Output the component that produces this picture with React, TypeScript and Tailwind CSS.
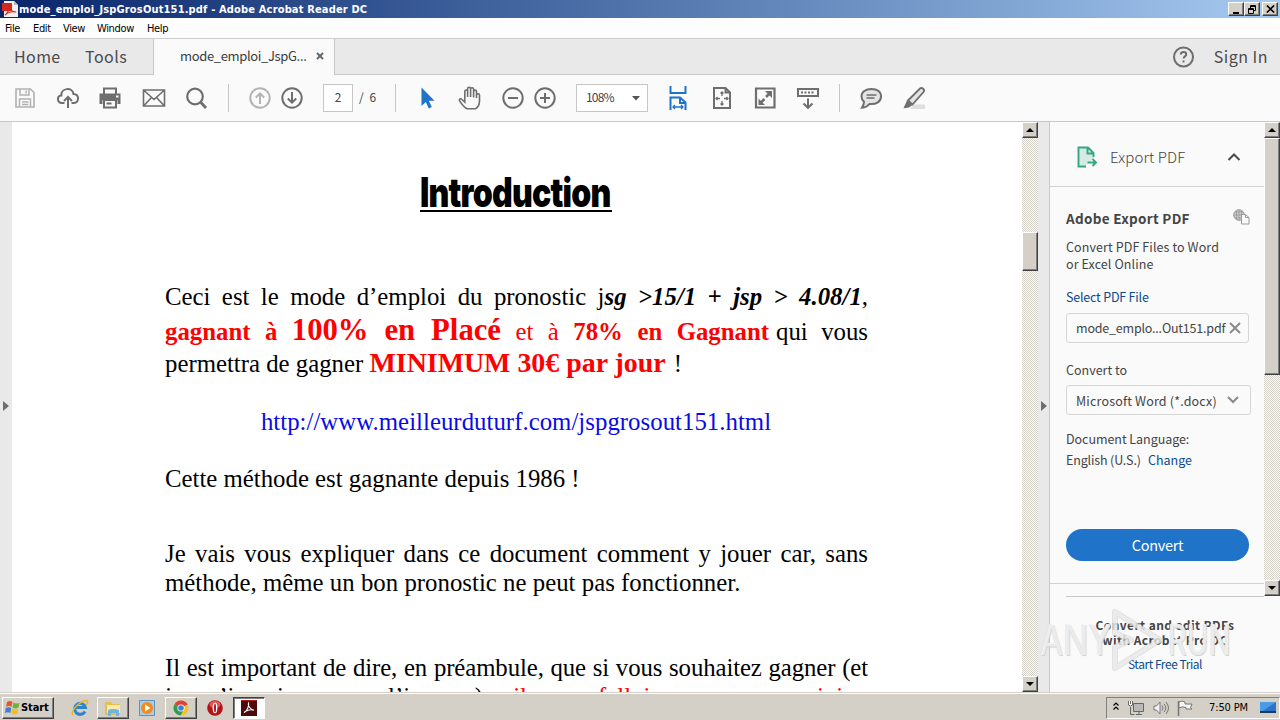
import type { ReactNode } from "react";

const DITHER =
  "bg-[conic-gradient(#ffffff_25%,#d4d0c8_0_50%,#ffffff_0_75%,#d4d0c8_0)] bg-[length:2px_2px]";
const RAISED =
  "bg-[#d4d0c8] border border-t-white border-l-white border-r-[#404040] border-b-[#404040] shadow-[inset_-1px_-1px_0_#808080]";

function ScrollArrow({ dir }: { dir: "up" | "down" }) {
  return (
    <div className={`${RAISED} flex h-4 w-4 shrink-0 items-center justify-center`}>
      <svg width="8" height="4" viewBox="0 0 8 4">
        <path d={dir === "up" ? "M0 4L4 0L8 4Z" : "M0 0L4 4L8 0Z"} fill="#000" />
      </svg>
    </div>
  );
}

function Icon({ children, className = "", color = "#6e6e6e" }: { children: ReactNode; className?: string; color?: string }) {
  return (
    <svg
      width="24"
      height="24"
      viewBox="0 0 24 24"
      fill="none"
      stroke={color}
      strokeWidth="2"
      className={`shrink-0 ${className}`}
    >
      {children}
    </svg>
  );
}

const Sep = () => <div className="h-7 w-px shrink-0 bg-[#c6c6c6]" />;

function TitleBar() {
  return (
    <div className="flex h-[18px] shrink-0 items-center bg-linear-to-r from-[#0a246a] to-[#a6caf0] pl-0.5 pr-0.5">
      <svg width="16" height="16" viewBox="0 0 16 16">
        <path d="M2 0h10l4 4v12H2z" fill="#f4f0f0" />
        <path d="M12 0v4h4z" fill="#b9b9b9" />
        <path d="M0 2h10v8H0z" fill="#d3281c" />
        <path d="M3 14c3-2 5-7 4-9c-1 3 3 6 7 6c-3-1-8 0-11 3z" fill="none" stroke="#d3281c" strokeWidth="1.2" />
      </svg>
      <div className="ml-[1px] pt-0.5 whitespace-nowrap font-['DejaVu_Sans_Condensed','DejaVu_Sans',sans-serif] text-[11px] font-bold tracking-[0.16px] text-white">
        mode_emploi_JspGrosOut151.pdf - Adobe Acrobat Reader DC
      </div>
      <div className="ml-auto flex">
        <div className={`${RAISED} flex h-3.5 w-4 items-center justify-center`}>
          <svg width="10" height="9" viewBox="0 0 10 9"><path d="M2 7h6v2H2z" fill="#000" /></svg>
        </div>
        <div className={`${RAISED} flex h-3.5 w-4 items-center justify-center`}>
          <svg width="10" height="9" viewBox="0 0 10 9" fill="none" stroke="#000">
            <path d="M3.5 3V.5h5v5H7M3 1.5h6M1.5 3.5h5v5h-5zM1 4.5h6" />
          </svg>
        </div>
        <div className={`${RAISED} ml-0.5 flex h-3.5 w-4 items-center justify-center`}>
          <svg width="9" height="8" viewBox="0 0 9 8" stroke="#000" strokeWidth="1.6">
            <path d="M.8 .5l7.4 7M8.2 .5l-7.4 7" />
          </svg>
        </div>
      </div>
    </div>
  );
}

function MenuBar() {
  return (
    <div className="flex h-5 shrink-0 items-center gap-3 bg-[#fdfdfd] pt-0.5 pl-[5px] font-['DejaVu_Sans_Condensed','DejaVu_Sans',sans-serif] text-[11px] tracking-[-0.35px] text-black">
      <span className="w-4">File</span>
      <span className="w-[18px]">Edit</span>
      <span className="w-[22px]">View</span>
      <span className="w-[38px]">Window</span>
      <span>Help</span>
    </div>
  );
}

function TabBar() {
  return (
    <div className="flex h-[37px] shrink-0 border-t border-[#cdcdcd] bg-[#e9e9e9] text-[#4b4b4b]">
      <div className="flex w-[154px] items-center border-r border-b border-[#c8c8c8] pb-0.5 pl-3.5 text-[16px] leading-5">
        <span className="w-[71px] tracking-[0.4px]">Home</span>
        <span className="tracking-[0.5px]">Tools</span>
      </div>
      <div className="flex w-[180px] items-center bg-[#fafafa] pb-0.5 pl-[26px] text-[13px] text-[#3c3c3c]">
        <span className="w-[136px] whitespace-nowrap tracking-[-0.35px]">mode_emploi_JspG...</span>
        <svg width="8" height="8" viewBox="0 0 8 8" stroke="#666" strokeWidth="2"><path d="M1 1l6 6M7 1L1 7" /></svg>
      </div>
      <div className="flex flex-1 items-center justify-end border-b border-l border-[#c8c8c8] pr-3 text-[16px]">
        <Icon className="mr-[18px]">
          <circle cx="11.500" cy="12" r="9.500" />
          <path d="M8.800 9.600c0-3.400 5.400-3.200 5.400-.2c0 2-2.600 2-2.600 4.200M11.500 15.500v2" />
        </Icon>
        <span className="pb-0.5 tracking-[0.5px]">Sign In</span>
      </div>
    </div>
  );
}

function Toolbar() {
  return (
    <div className="flex h-[47px] shrink-0 items-center gap-[19px] border-b border-[#c8c8c8] bg-[#fafafa] pl-[13px]">
      <Icon color="#b3b3b3">
        <path d="M3 3h14.5L21 6.500V21H3z" strokeWidth="1.700" />
        <path d="M7 3v6h9V3M6.500 21v-8h11v8M9 16h6.500M9 18.500h6.500M13 4.500v3" strokeWidth="1.500" />
      </Icon>
      <Icon>
        <path d="M8.500 17H6c-5 0-5.500-7-.7-7.500C5 1.500 16.500 1 17.500 8c6-.3 6 9 .5 9h-2.500M12 22V11.500M8 15l4-4l4 4" />
      </Icon>
      <Icon className="-ml-px">
        <path d="M6 8V2.500h12V8" />
        <path d="M1.500 7.500h21V18h-3v-4h-15v4h-3z" fill="#6e6e6e" stroke="none" />
        <path d="M6 14h12v7.500H6zM8.500 17.500h5" />
        <path d="M18 10.500h2.500" stroke="#fafafa" />
      </Icon>
      <Icon className="ml-px">
        <path d="M1.500 4h21v16h-21zM2 4.500l10 9L22 4.500M2 19.500l7.500-8M22 19.500l-7.500-8" strokeWidth="1.600" />
      </Icon>
      <Icon>
        <circle cx="10" cy="10.500" r="7.800" strokeWidth="2.200" />
        <path d="M15.500 16l5.500 6" strokeWidth="2.800" />
      </Icon>
      <Sep />
      <div className="flex gap-2">
        <Icon color="#b3b3b3"><circle cx="12" cy="12" r="9.700" /><path d="M12 18V7.500M7.800 11.500L12 7.300l4.200 4.200" /></Icon>
        <Icon><circle cx="12" cy="12" r="9.700" /><path d="M12 6v10.500M7.800 12.500l4.200 4.200l4.200-4.200" /></Icon>
      </div>
      <div className="flex items-center gap-1.5 text-[12px] leading-4 text-[#444]">
        <div className="flex h-7 w-[30px] items-center justify-center border border-[#c6c6c6] bg-white pb-0.5">2</div>
        <span className="w-[17px] pb-0.5 whitespace-pre [word-spacing:3px]">/ 6</span>
      </div>
      <Sep />
      <Icon color="none"><path d="M6.500 1.500V20l4.300-4l3 6.500l3-1.400l-3-6.300h5.700z" fill="#1f73c9" /></Icon>
      <Icon>
        <path d="M9 22.800c-3-1.500-5.500-4.800-7.500-8.100c-.8-1.600 1.200-2.600 2.500-1.200l2.800 2.700V5.500c0-2 2.800-2 2.800 0V11V2.800c0-2 3-2 3 0v8.200V3.300c0-2 3-2 3 0V11.500V5.500c0-1.900 2.900-1.900 2.900 0v6.500V9c0-1.700 3-1.700 3 0v6c0 3-1.500 6.300-4 7.800z" strokeWidth="1.600" />
      </Icon>
      <div className="flex gap-2">
        <Icon><circle cx="12" cy="12" r="9.700" /><path d="M7 12h10" /></Icon>
        <Icon><circle cx="12" cy="12" r="9.700" /><path d="M7 12h10M12 7v10" /></Icon>
      </div>
      <div className="flex h-7 w-[72px] items-center justify-between border border-[#c6c6c6] bg-white pr-[7px] pl-[9px] text-[12px] text-[#444]">
        <span className="pb-0.5 tracking-[-0.8px]">108%</span>
        <svg width="8" height="5" viewBox="0 0 8 5"><path d="M0 0h8L4 4.500z" fill="#555" /></svg>
      </div>
      <Icon color="#1f73c9" className="-ml-px">
        <path d="M4.500 0v7h15V0M4.500 24V11.500h9.500l5.500 5V24M14 12v5h5.500" />
        <path d="M7 21h10M9 19l-2 2l2 2M15 19l2 2l-2 2" strokeWidth="1.300" />
      </Icon>
      <Icon className="ml-px">
        <path d="M4 2h11.500L20 6.500V22H4zM15.500 2v4.500H20" />
        <path d="M12 6v4M12 15v4M6 12.500h4M14 12.500h4M10.500 7.500L12 6l1.500 1.500M10.500 17.500L12 19l1.500-1.500M7.500 11L6 12.500L7.500 14M16.500 11l1.500 1.500l-1.500 1.500" strokeWidth="1.300" />
      </Icon>
      <Icon>
        <path d="M3 2.500h18.500v19H3z" strokeWidth="2.200" />
        <path d="M12 5h7v7zM5.500 12.500v6.500H12z" fill="#6e6e6e" stroke="none" />
        <path d="M17 7L13 11M7.500 17L11.500 13" strokeWidth="2.500" />
      </Icon>
      <Icon>
        <path d="M2 3h20v7H2z" />
        <path d="M5 6.500h14" strokeDasharray="2 1.500" />
        <path d="M12 12.500v9M7.500 17.500l4.500 4.300l4.500-4.300" />
      </Icon>
      <Sep />
      <Icon>
        <path d="M12.500 3C6.500 3 2.500 6 2.500 10.500c0 2.300 1 4 2.500 5.200c0 2.300-.8 4-2 6c3.300-.3 6-1.700 7.500-3.700c7 .6 11.500-2.500 11.500-7.500S18 3 12.500 3z" fill="#e4e4e4" />
        <path d="M7.500 9h10M7.500 12h8" strokeWidth="1.500" />
      </Icon>
      <Icon>
        <path d="M12 18.500h11v4.500H8z" fill="#dedede" stroke="none" />
        <path d="M6 14.500L18 2.500c2-1.500 5.200 1 3.700 3.300L10.500 18.500z" fill="#e4e4e4" strokeWidth="1.800" />
        <path d="M5 14.500l5.500 4.500l-3.500 2.500l-5.500 .8z" fill="#6e6e6e" stroke="none" />
      </Icon>
    </div>
  );
}

const JUSTIFY = "text-justify [text-align-last:justify]";

function Document() {
  return (
    <div className="w-[1010px] shrink-0 overflow-hidden bg-white pl-[153px] font-['Liberation_Serif',serif] text-[24.8px] leading-[29px] text-black">
      <div className="flex h-[160px] w-[702px] justify-center pt-[49px]">
        <h1 className="h-[41px] w-[192px] border-b-2 border-black">
          <span className="-mt-px inline-block origin-left scale-x-[0.782] font-[Inter,sans-serif] text-[41px] leading-[44px] font-black tracking-[-1px]">Introduction</span>
        </h1>
      </div>
      <div className={`h-[29px] w-[703px] ${JUSTIFY}`}>
        Ceci est le mode d’emploi du pronostic j<b><i>sg &gt;15/1 + jsp &gt; 4.08/1</i></b>,
      </div>
      <div className="flex h-[35px] w-[703px] items-baseline justify-between leading-[38px]">
        <div className={`w-[604px] text-[#ff0000] ${JUSTIFY}`}>
          <b>gagnant à <span className="text-[30.7px]">100% en Placé</span></b> et à <b>78% en Gagnant</b>
        </div>
        <div className={`w-[92px] ${JUSTIFY}`}>qui vous</div>
      </div>
      <div className="h-[33px] whitespace-nowrap leading-[33px]">
        permettra de gagner <b className="text-[27.9px] text-[#ff0000]">MINIMUM 30€ par jour</b> <span className="ml-0.5">!</span>
      </div>
      <div className="mt-[28px] w-[702px] text-center tracking-[0.03px] text-[#0a0ae6]">http://www.meilleurduturf.com/jspgrosout151.html</div>
      <div className="mt-[28px]">Cette méthode est gagnante depuis 1986 !</div>
      <div className={`mt-[46px] w-[703px] ${JUSTIFY}`}>Je vais vous expliquer dans ce document comment y jouer car, sans</div>
      <div className="tracking-[0.02px]">méthode, même un bon pronostic ne peut pas fonctionner.</div>
      <div className={`mt-[56px] w-[703px] tracking-[-0.1px] ${JUSTIFY}`}>Il est important de dire, en préambule, que si vous souhaitez gagner (et</div>
      <div className={`w-[703px] ${JUSTIFY}`}>
        je n’imagine pas l’inverse), <span className="text-[#ff0000]">il va falloir un cran mini…</span>
      </div>
    </div>
  );
}

function SidePanel() {
  return (
    <div className="flex min-w-0 flex-1 flex-col border-l border-[#c8c8c8] bg-[#fafafa] text-[12.5px] leading-[17px] text-[#444]">
      <div className="flex h-[474px]">
        <div className="w-[214px]">
          <div className="flex h-[65px] items-center border-b border-[#d2d2d2] pt-1.5 pl-[25px]">
            <svg width="24" height="24" viewBox="0 0 24 24" fill="none" stroke="#36a583" strokeWidth="1.900">
              <path d="M10 21.500H3.500v-19H13l5.500 5.500v5z" fill="#d6eae4" stroke="none" />
              <path d="M11 21.500H3.500v-19H13l5.500 5.500v4M12.500 3v5.500h6M12.500 17.500h8M17.500 14l3.500 3.500l-3.500 3.500" />
            </svg>
            <span className="ml-[11px] w-[117px] pb-0.5 text-[15px] font-light tracking-[0.1px]">Export PDF</span>
            <svg width="14" height="8" viewBox="0 0 14 8" fill="none" stroke="#4b4b4b" strokeWidth="2"><path d="M1.500 7L7 1.500L12.500 7" /></svg>
          </div>
          <div className="h-[397px] border-b border-[#d2d2d2] pt-[23px] pl-4">
            <div className="flex h-[18px] w-[184px] items-start justify-between">
              <b className="text-[13.5px] tracking-[0.3px]">Adobe Export PDF</b>
              <svg width="17" height="16" viewBox="0 0 17 16" fill="none" stroke="#999" className="mt-[-1px]">
                <circle cx="6" cy="6" r="5.300" fill="#ccc" /><path d="M6 1v10M1 6h10M2 3h8M2 9h8M3.500 2v8M8.500 2v8" strokeWidth=".8" />
                <path d="M8.500 5.500h4l3.500 3v6.500H8.500z" fill="#fafafa" /><path d="M12.500 5.500v3H16" />
              </svg>
            </div>
            <div className="mt-[10px] tracking-[0.1px]">Convert PDF Files to Word<br />or Excel Online</div>
            <div className="mt-4 tracking-[-0.2px] text-[#0d4a8f]">Select PDF File</div>
            <div className="mt-2 flex h-[30px] w-[183px] items-center rounded-[3px] border border-[#d5d5d5] pb-0.5 pl-[9px]">
              <span className="w-[153px] whitespace-nowrap tracking-[-0.2px]">mode_emplo...Out151.pdf</span>
              <svg width="12" height="12" viewBox="0 0 12 12" stroke="#8a8a8a" strokeWidth="2" className="mt-0.5"><path d="M1 1l10 10M11 1L1 11" /></svg>
            </div>
            <div className="mt-[18px]">Convert to</div>
            <div className="mt-[7px] flex h-[30px] w-[185px] items-center rounded-[3px] border border-[#d5d5d5] pl-[9px]">
              <span className="w-[151px] whitespace-nowrap tracking-[0.18px]">Microsoft Word (*.docx)</span>
              <svg width="12" height="8" viewBox="0 0 12 8" fill="none" stroke="#8a8a8a" strokeWidth="2"><path d="M1 1l5 5l5-5" /></svg>
            </div>
            <div className="mt-[15px] tracking-[-0.05px]">Document Language:</div>
            <div className="mt-1 flex"><span className="w-[82px] tracking-[-0.15px]">English (U.S.)</span><span className="text-[#0d4a8f]">Change</span></div>
            <div className="mt-[61px] flex h-8 w-[183px] items-center justify-center rounded-full bg-[#1f73c9] pb-0.5 text-[14.5px] tracking-[-0.3px] text-white">Convert</div>
          </div>
        </div>
        <div className={`flex w-4 flex-col ${DITHER}`}>
          <ScrollArrow dir="up" />
          <div className={`h-[237px] w-4 ${RAISED}`} />
          <div className="flex-1" />
          <ScrollArrow dir="down" />
        </div>
      </div>
      <div className="ml-4 h-[96px] w-[198px] border-t border-[#c8c8c8] pt-[20px] text-center">
        <b className="block text-[12px] leading-[15px] tracking-[0.4px]">Convert and edit PDFs<br />with Acrobat Pro DC</b>
        <div className="mt-2 text-[12px] tracking-[-0.45px] text-[#0d4a8f]">Start Free Trial</div>
      </div>
    </div>
  );
}

function Taskbar() {
  return (
    <div className="flex h-7 shrink-0 items-center border-t border-[#d4d0c8] bg-[#d4d0c8] pt-[2px] pl-0.5 shadow-[inset_0_1px_0_#fff]">
      <div className={`${RAISED} flex h-[22px] w-[52px] items-center pl-0.5`}>
        <svg width="15" height="15" viewBox="0 0 15 15">
          <path d="M2 2q3-2 5.500 0L6.500 7Q4 5 1 7z" fill="#e8572a" /><path d="M8.500 2.500q3 2 6 .3L13.500 7.500q-3 2-6 0z" fill="#6db33a" />
          <path d="M.8 8Q4 6.500 6.300 8L5.300 13Q3 11.500 0 13z" fill="#3b7ed4" /><path d="M7.300 8.500q3 2 6 .3L12.300 13.500q-3 2-6 0z" fill="#f4bd28" />
        </svg>
        <span className="ml-px pt-0.5 font-['DejaVu_Sans_Condensed','DejaVu_Sans',sans-serif] text-[11px] font-bold tracking-[-0.1px] text-black">Start</span>
      </div>
      <svg width="18" height="18" viewBox="0 0 18 18" fill="none" className="ml-[17px]">
        <path d="M14 12.500A5.500 5.500 0 1 1 14.500 8.500H5" stroke="#2c83cf" strokeWidth="3" />
        <path d="M2 16C-1 13 8 2 15.500 1.500c2 .3 1 3-.5 4.500" stroke="#e9b529" strokeWidth="1.500" />
      </svg>
      <div className={`${RAISED} ml-2 flex h-[22px] w-8 items-center justify-center`}>
        <svg width="18" height="18" viewBox="0 0 18 18">
          <path d="M1 3h6l1 2h8v11H1z" fill="#e3bf52" /><path d="M3 6h13v8H3z" fill="#faeaa5" /><path d="M4 17v-6q5-2 11 0v6h-3v-3H7v3z" fill="#6fb5df" />
        </svg>
      </div>
      <svg width="16" height="16" viewBox="0 0 16 16" className="ml-[10px]">
        <path d="M.5 .5h15v15H.5z" fill="#a7cdea" stroke="#5b93be" /><circle cx="8" cy="8" r="6" fill="#f28a1c" /><path d="M6 4.500L11.500 8L6 11.500z" fill="#fff" />
      </svg>
      <div className={`${RAISED} ml-[10px] flex h-[22px] w-8 items-center justify-center`}>
        <svg width="16" height="16" viewBox="0 0 16 16">
          <circle cx="8" cy="8" r="7.500" fill="#f4c322" /><path d="M8 8L1.500 4.200A7.500 7.500 0 0 1 14.500 4.200z" fill="#dd4437" />
          <path d="M8 8L1.500 4.200A7.500 7.500 0 0 0 7.500 15.500L11 9.500z" fill="#2f9e54" /><path d="M3 4.500a7 7 0 0 1 11.600 0H8z" fill="#dd4437" />
          <circle cx="8" cy="8" r="3.600" fill="#fff" /><circle cx="8" cy="8" r="2.800" fill="#3b7de0" />
        </svg>
      </div>
      <svg width="16" height="16" viewBox="0 0 16 16" className="ml-[10px]">
        <circle cx="8" cy="8" r="7.800" fill="#b41219" /><ellipse cx="8" cy="4.500" rx="5.500" ry="3.500" fill="#e0575a" /><ellipse cx="8" cy="8" rx="2.400" ry="5.300" fill="#fff" /><ellipse cx="8" cy="8" rx="1" ry="4.500" fill="#b41219" />
      </svg>
      <div className="ml-[10px] flex h-[22px] w-8 items-center justify-center border border-t-[#404040] border-l-[#404040] border-r-white border-b-white bg-white shadow-[inset_1px_1px_0_#808080]">
        <svg width="16" height="16" viewBox="0 0 16 16" fill="none">
          <path d="M0 0h16v16H0z" fill="#4c0a0b" /><path d="M0 0h16v1H0z" fill="#b01818" /><path d="M3 12.500c3-1 5.500-7 4.500-9.500c-1.200 2.500 2.500 7 5.500 7.300c-2.500-1.300-7.500-.2-10 2.200z" stroke="#fff" strokeWidth="1.100" />
        </svg>
      </div>
      <div className="ml-auto flex h-[22px] w-[174px] items-center border border-t-[#808080] border-l-[#808080] border-r-white border-b-white pl-[6px]">
        <svg width="6" height="8" viewBox="0 0 6 8" fill="none" stroke="#000" strokeWidth="1.200" className="mb-1"><path d="M.5 3.500L3 1l2.500 2.500M.5 7.500L3 5l2.500 2.500" /></svg>
        <svg width="17" height="16" viewBox="0 0 17 16" fill="none" stroke="#666" className="ml-[9px]">
          <path d="M5.500 3.500h10v8h-10z" fill="#b9b9b9" /><path d="M8 14.500h6M11 12v2M2.500 7v7.500h4" /><path d="M.5 1v4q2 2 4 0V1M2.500 1v3" fill="#fff" />
        </svg>
        <svg width="17" height="14" viewBox="0 0 17 14" fill="none" stroke="#777" className="ml-2">
          <path d="M1 5h2.500L7 1v12L3.500 9H1z" fill="#f5f5f5" /><path d="M9 4.500q2 2.500 0 5M11 2.800q3.500 4.200 0 8.400M13 1q5 6 0 12" />
        </svg>
        <svg width="17" height="16" viewBox="0 0 17 16" fill="none" stroke="#777" className="ml-[7px]">
          <path d="M1.500 1v15" strokeWidth="1.500" /><path d="M2 2q3-2 6 0v2h7l-1.500 3.500L15 9H9V7.500Q5 6 2 8z" fill="#f5f5f5" />
        </svg>
        <span className="ml-[15px] w-[51px] pt-0.5 whitespace-nowrap font-['DejaVu_Sans_Condensed','DejaVu_Sans',sans-serif] text-[11px] tracking-[-0.12px] text-black">7:50 PM</span>
        <svg width="16" height="13" viewBox="0 0 16 13"><path d="M0 1h16v9H0z" fill="#2c74c8" /><path d="M0 1h16L3 10H0z" fill="#4c9be4" /><path d="M0 10h16v2H0z" fill="#163c66" /></svg>
      </div>
    </div>
  );
}

function Watermark() {
  return (
    <div className="pointer-events-none absolute top-[608px] left-[1040px] flex h-[64px] items-center font-[Inter,sans-serif] text-[42px] leading-none text-white/60 [text-shadow:1px_1px_1px_#cfcfcf,-1px_0_1px_#e2e2e2]">
      <span className="inline-block w-[70px] origin-left scale-x-[0.8]">ANY</span>
      <svg width="54" height="62" viewBox="0 0 54 62" fill="none" strokeLinejoin="round">
        <path d="M5 3L50 31L5 59V38l16-7L5 24z" stroke="#d0d0d0" strokeOpacity=".6" strokeWidth="6" />
        <path d="M5 3L50 31L5 59V38l16-7L5 24z" stroke="#f2f2f2" strokeOpacity=".6" strokeWidth="4" />
      </svg>
      <span className="ml-1 inline-block w-[66px] origin-left scale-x-[0.7]">RUN</span>
    </div>
  );
}

export default function App() {
  return (
    <div className="relative flex h-[720px] w-[1280px] flex-col overflow-hidden bg-white font-['Noto_Sans_CJK_SC','Noto_Sans',sans-serif]">
      <TitleBar />
      <MenuBar />
      <TabBar />
      <Toolbar />
      <div className="flex h-[570px] shrink-0">
        <div className="flex w-3 items-center bg-[#e9e9e9] pb-0.5 pl-[3px]">
          <svg width="6" height="10" viewBox="0 0 6 10"><path d="M0 0l6 5l-6 5z" fill="#6e6e6e" /></svg>
        </div>
        <Document />
        <div className={`flex w-4 shrink-0 flex-col ${DITHER}`}>
          <ScrollArrow dir="up" />
          <div className={`mt-[94px] h-[39px] w-4 ${RAISED}`} />
          <div className="flex-1" />
          <ScrollArrow dir="down" />
        </div>
        <div className="flex w-[11px] shrink-0 items-center bg-[#e9e9e9] pb-0.5 pl-[3px]">
          <svg width="6" height="10" viewBox="0 0 6 10"><path d="M0 0l6 5l-6 5z" fill="#6e6e6e" /></svg>
        </div>
        <SidePanel />
      </div>
      <Taskbar />
      <Watermark />
    </div>
  );
}
